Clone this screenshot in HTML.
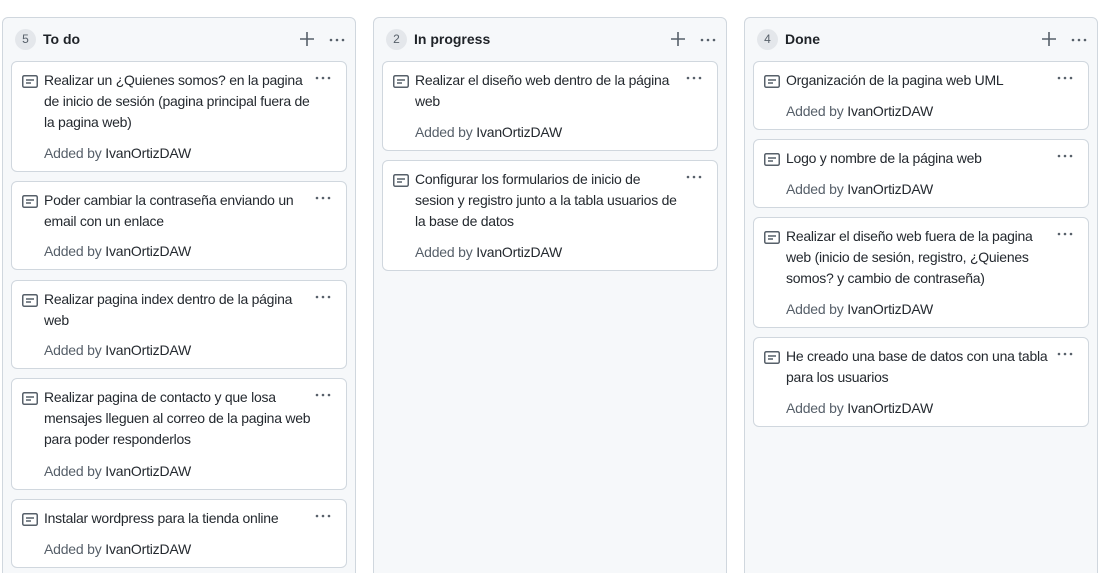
<!DOCTYPE html><html><head><meta charset="utf-8"><style>
*{box-sizing:border-box;margin:0;padding:0}
html,body{width:1105px;height:573px;overflow:hidden}
body{background:#fff;font-family:"Liberation Sans",sans-serif;color:#24292f;font-size:14px;position:relative}
.col{position:absolute;top:17px;width:354px;height:570px;background:#f6f8fa;border:1px solid #d0d7de;border-radius:6px}
.cnt{position:absolute;left:12px;top:11px;width:21px;height:21px;border-radius:50%;background:#e4e7eb;color:#57606a;font-size:12px;text-align:center;line-height:21px}
.ttl{position:absolute;left:40px;top:13px;font-weight:bold;font-size:14px;color:#1f2328}
.plus{position:absolute;right:40px;top:13px}
.hd{position:absolute;right:10px;top:20px}
.card{position:absolute;left:8px;width:336px;background:#fff;border:1px solid #d0d7de;border-radius:6px}
.card .ic{position:absolute;left:10px;top:12px}
.card .t{position:absolute;left:32px;top:8px;line-height:21px;white-space:nowrap;letter-spacing:-0.25px}
.card .a{position:absolute;left:32px;bottom:7px;line-height:21px;color:#57606a;letter-spacing:-0.2px}
.card .a b{font-weight:normal;color:#24292f}
.card .d{position:absolute;left:303px;top:14px}
</style></head><body>
<svg width="0" height="0" style="position:absolute"><defs>
<g id="note"><rect x="0.75" y="1.75" width="14.5" height="11.5" rx="1.5" fill="none" stroke="#57606a" stroke-width="1.5"/><path d="M4 6h8M4 9h5" stroke="#57606a" stroke-width="1.5"/></g>
<g id="dots" fill="#57606a"><circle cx="2" cy="2" r="1.3"/><circle cx="8" cy="2" r="1.3"/><circle cx="14" cy="2" r="1.3"/></g>
<g id="plus"><path d="M8 1v14M1 8h14" stroke="#57606a" stroke-width="1.6"/></g>
</defs></svg>

<div class="col" style="left:2px">
<div class="cnt">5</div><div class="ttl">To do</div>
<svg class="plus" width="16" height="16"><use href="#plus"/></svg>
<svg class="hd" width="16" height="4"><use href="#dots"/></svg>
<div class="card" style="top:43px;height:111px"><svg class="ic" width="16" height="15"><use href="#note"/></svg><div class="t">Realizar un ¿Quienes somos? en la pagina<br>de inicio de sesión (pagina principal fuera de<br>la pagina web)</div><svg class="d" width="16" height="4"><use href="#dots"/></svg><div class="a">Added by <b>IvanOrtizDAW</b></div></div>
<div class="card" style="top:163px;height:89px"><svg class="ic" width="16" height="15"><use href="#note"/></svg><div class="t">Poder cambiar la contraseña enviando un<br>email con un enlace</div><svg class="d" width="16" height="4"><use href="#dots"/></svg><div class="a">Added by <b>IvanOrtizDAW</b></div></div>
<div class="card" style="top:262px;height:89px"><svg class="ic" width="16" height="15"><use href="#note"/></svg><div class="t">Realizar pagina index dentro de la página<br>web</div><svg class="d" width="16" height="4"><use href="#dots"/></svg><div class="a">Added by <b>IvanOrtizDAW</b></div></div>
<div class="card" style="top:360px;height:112px"><svg class="ic" width="16" height="15"><use href="#note"/></svg><div class="t">Realizar pagina de contacto y que losa<br>mensajes lleguen al correo de la pagina web<br>para poder responderlos</div><svg class="d" width="16" height="4"><use href="#dots"/></svg><div class="a">Added by <b>IvanOrtizDAW</b></div></div>
<div class="card" style="top:481px;height:69px"><svg class="ic" width="16" height="15"><use href="#note"/></svg><div class="t">Instalar wordpress para la tienda online</div><svg class="d" width="16" height="4"><use href="#dots"/></svg><div class="a">Added by <b>IvanOrtizDAW</b></div></div>
</div>

<div class="col" style="left:373px">
<div class="cnt">2</div><div class="ttl">In progress</div>
<svg class="plus" width="16" height="16"><use href="#plus"/></svg>
<svg class="hd" width="16" height="4"><use href="#dots"/></svg>
<div class="card" style="top:43px;height:90px"><svg class="ic" width="16" height="15"><use href="#note"/></svg><div class="t">Realizar el diseño web dentro de la página<br>web</div><svg class="d" width="16" height="4"><use href="#dots"/></svg><div class="a">Added by <b>IvanOrtizDAW</b></div></div>
<div class="card" style="top:142px;height:111px"><svg class="ic" width="16" height="15"><use href="#note"/></svg><div class="t">Configurar los formularios de inicio de<br>sesion y registro junto a la tabla usuarios de<br>la base de datos</div><svg class="d" width="16" height="4"><use href="#dots"/></svg><div class="a">Added by <b>IvanOrtizDAW</b></div></div>
</div>

<div class="col" style="left:744px">
<div class="cnt">4</div><div class="ttl">Done</div>
<svg class="plus" width="16" height="16"><use href="#plus"/></svg>
<svg class="hd" width="16" height="4"><use href="#dots"/></svg>
<div class="card" style="top:43px;height:69px"><svg class="ic" width="16" height="15"><use href="#note"/></svg><div class="t">Organización de la pagina web UML</div><svg class="d" width="16" height="4"><use href="#dots"/></svg><div class="a">Added by <b>IvanOrtizDAW</b></div></div>
<div class="card" style="top:121px;height:69px"><svg class="ic" width="16" height="15"><use href="#note"/></svg><div class="t">Logo y nombre de la página web</div><svg class="d" width="16" height="4"><use href="#dots"/></svg><div class="a">Added by <b>IvanOrtizDAW</b></div></div>
<div class="card" style="top:199px;height:111px"><svg class="ic" width="16" height="15"><use href="#note"/></svg><div class="t">Realizar el diseño web fuera de la pagina<br>web (inicio de sesión, registro, ¿Quienes<br>somos? y cambio de contraseña)</div><svg class="d" width="16" height="4"><use href="#dots"/></svg><div class="a">Added by <b>IvanOrtizDAW</b></div></div>
<div class="card" style="top:319px;height:90px"><svg class="ic" width="16" height="15"><use href="#note"/></svg><div class="t">He creado una base de datos con una tabla<br>para los usuarios</div><svg class="d" width="16" height="4"><use href="#dots"/></svg><div class="a">Added by <b>IvanOrtizDAW</b></div></div>
</div>
</body></html>
